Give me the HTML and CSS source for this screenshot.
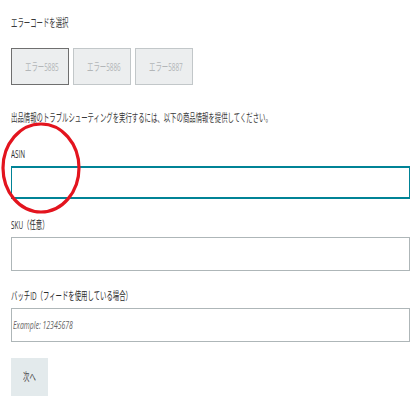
FILE: index.html
```html
<!DOCTYPE html>
<html lang="ja">
<head>
<meta charset="utf-8">
<link rel="stylesheet" href="styles.css">
</head>
<body>
<div class="page">
  <div class="title"><span class="c">エラーコードを選択</span></div>
  <div class="codes">
    <div class="code selected"><span class="c">エラー5885</span></div>
    <div class="code"><span class="c">エラー5886</span></div>
    <div class="code"><span class="c">エラー5887</span></div>
  </div>
  <div class="intro"><span class="c">出品情報のトラブルシューティングを実行するには、以下の商品情報を提供してください。</span></div>
  <div class="field asin">
    <div class="label"><span class="c">ASIN</span></div>
    <div class="input focus"></div>
    <svg class="circle" width="84" height="94" viewBox="0 0 84 94"><ellipse cx="41" cy="47" rx="38" ry="44" fill="none" stroke="#e3141e" stroke-width="3.2"/></svg>
  </div>
  <div class="field">
    <div class="label"><span class="c">SKU（任意）</span></div>
    <div class="input"></div>
  </div>
  <div class="field batch">
    <div class="label"><span class="c">バッチID（フィードを使用している場合）</span></div>
    <div class="input ph-input"><span class="c ph">Example: 12345678</span></div>
  </div>
  <div class="next"><span class="c">次へ</span></div>
</div>
</body>
</html>
```
FILE: styles.css
```css
* { box-sizing: border-box; }
html, body { margin: 0; padding: 0; background: #fff; }
body { font-family: "Open Sans", "Noto Sans CJK JP", sans-serif; color: #333; font-size: 11px; }
.page { padding: 15px 10px 0 11px; width: 420px; overflow: hidden; }
.c { display: inline-block; transform: scaleX(0.58); transform-origin: left center; white-space: nowrap; line-height: 14px; }
.title, .intro, .label { overflow: hidden; }
.title { height: 14px; color: #3a3a3a; }
.codes { display: flex; gap: 4px; margin-top: 19px; }
.code { width: 58px; height: 37px; background: #eceeef; border: 1px solid #c2c7c9; color: #b3b6b8; display: flex; align-items: center; padding-left: 13px; overflow: hidden; }
.code.selected { border-color: #6f6f6f; }
.intro { margin-top: 25px; height: 14px; color: #3a3a3a; }
.field { position: relative; }
.asin { margin-top: 22px; }
.label { height: 14px; color: #2a2a2a; margin-bottom: 6px; }
.field + .field { margin-top: 18px; }
.field + .field .label { margin-bottom: 6px; }
.batch.field { margin-top: 17px; }
.input { width: 399px; height: 34px; border: 1px solid #aeb6b8; background: #fff; display: flex; align-items: center; padding-left: 4px; overflow: hidden; }
.ph-input { padding-left: 1px; }
.input.focus { height: 33px; border-color: #008396; border-width: 2px 1px; }
.ph { font-style: italic; color: #666; font-size: 11.5px; transform: scaleX(0.6); }
.circle { position: absolute; left: -11px; top: -25px; }
.next { margin-top: 16px; width: 37px; height: 38px; background: #e3eaec; display: flex; align-items: center; padding-left: 12px; color: #444; overflow: hidden; }
```
